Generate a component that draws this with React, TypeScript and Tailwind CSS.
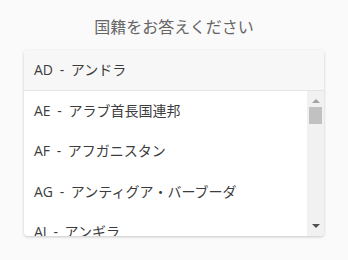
import React from "react";

const countries = [
  "AE - アラブ首長国連邦",
  "AF - アフガニスタン",
  "AG - アンティグア・バーブーダ",
  "AI - アンギラ",
];

export default function App() {
  return (
    <div
      className="w-[348px] h-[260px] bg-[#fafafa] flex flex-col items-center overflow-hidden"
      style={{ fontFamily: '"Open Sans", "Noto Sans CJK JP", sans-serif' }}
    >
      <h1 className="mt-[15px] h-[24px] text-[16px] leading-[24px] text-[#666666]">
        国籍をお答えください
      </h1>
      <div className="mt-[11px] w-[300px] rounded-[4px] bg-white shadow-[0_1px_3px_rgba(0,0,0,0.2)] overflow-hidden">
        <div className="h-[41px] bg-[#f7f7f7] border-b border-[#e4e4e4] flex items-center px-[10px] pb-[1px] text-[14px] text-[#3c3c3c] [word-spacing:3px]">
          AD - アンドラ
        </div>
        <div className="flex h-[145px]">
          <ul className="flex-1 overflow-hidden">
            {countries.map((c) => (
              <li
                key={c}
                className="h-[40.5px] flex items-center px-[10px] text-[14px] text-[#3c3c3c] [word-spacing:3px] first:mt-[-1px]"
              >
                {c}
              </li>
            ))}
          </ul>
          {/* fake scrollbar */}
          <div className="w-[17px] bg-[#f1f1f1] flex flex-col items-center">
            <svg width="8" height="5" viewBox="0 0 8 5" className="mt-[7px]">
              <path d="M0 5 L4 1 L8 5 Z" fill="#a3a3a3" />
            </svg>
            <div className="mt-[4px] w-[13px] h-[17px] bg-[#c1c1c1]" />
            <div className="flex-1" />
            <svg width="8" height="5" viewBox="0 0 8 5" className="mb-[7px]">
              <path d="M0 0 L8 0 L4 4 Z" fill="#505050" />
            </svg>
          </div>
        </div>
      </div>
    </div>
  );
}
